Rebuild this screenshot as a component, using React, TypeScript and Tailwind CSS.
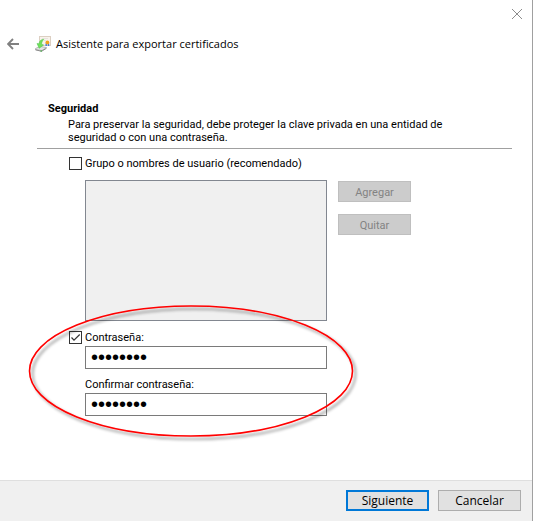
import React, { useState } from 'react';

const WizardIcon = () => (
    <svg className="h-4 w-4" viewBox="0 0 16 16" aria-hidden="true">
        <rect x="4.5" y="0.5" width="11" height="9" fill="#f8f3ec" stroke="#dccfc2" />
        <path d="M7 2.5h6M9 4.5h2" stroke="#e8e2dc" />
        <path d="M11.2 7.5v2.500M13.500 7.500v2.500" stroke="#3c78dc" strokeWidth="1.4" />
        <circle cx="12.400" cy="6.500" r="1.900" fill="#f0a01e" />
        <path d="M0.5 12.500 5 10.500l6.500 1-4.500 3-6.500-.8z" fill="#e4e4e4" stroke="#a8a8a8" strokeWidth="0.8" />
        <path d="M0.5 13.800 6.500 15.300l5-3" fill="none" stroke="#8a8a8a" />
        <path d="M5.500 15h1.500" stroke="#35b535" />
        <path d="M8.800 3.300C5.800 3.500 4.300 5 4 7.800L2 7.500 4.200 12.300 8.600 9l-2-.8C6.600 6.500 7.300 5 8.800 3.300z" fill="#6fe05a" stroke="#4cc44a" strokeWidth="0.5" />
    </svg>
);

const CheckBox = ({ id, checked, onChange }: { id: string; checked: boolean; onChange: () => void }) => (
    <span className="relative flex h-[13px] w-[13px] shrink-0">
        <input
            id={id}
            type="checkbox"
            checked={checked}
            onChange={onChange}
            className="h-[13px] w-[13px] appearance-none border border-[#333333] bg-white"
        />
        {checked && (
            <svg className="pointer-events-none absolute inset-0 h-[13px] w-[13px]" viewBox="0 0 13 13" aria-hidden="true">
                <path d="M2.500 6.500 5 9.200 10.700 3.500" fill="none" stroke="#333333" strokeWidth="1.2" />
            </svg>
        )}
    </span>
);

const App = () => {
    const [useGroups, setUseGroups] = useState(false);
    const [usePassword, setUsePassword] = useState(true);
    const [password, setPassword] = useState('password');
    const [confirm, setConfirm] = useState('password');

    const sideButton = 'h-[21px] w-[73px] border border-[#bfbfbf] bg-[#cccccc] pt-px text-[11px] leading-none text-[#838383]';
    const field = 'block h-[23px] w-full border border-[#7a7a7a] bg-white px-[5px] font-["Liberation_Sans"] text-xl leading-none outline-none';

    return (
        <div className="flex min-h-screen flex-col border-r border-[#a0a0a0] bg-white font-['Roboto',sans-serif] text-[11px] text-black">
            {/* Title bar */}
            <header>
                <div className="flex h-7 justify-end px-[9px] pt-2">
                    <button type="button" aria-label="Cerrar" className="h-3 w-3">
                        <svg viewBox="0 0 12 12" className="h-3 w-3">
                            <path d="M1 1l10 10M11 1L1 11" stroke="#8c8c8c" fill="none" />
                        </svg>
                    </button>
                </div>
                <div className="flex h-8 items-center pl-[7px]">
                    <button type="button" aria-label="Atrás" className="mr-4 h-3 w-3">
                        <svg viewBox="0 0 12 12" className="h-3 w-3">
                            <path d="M6 1L1 6l5 5M1 6h11" stroke="#808080" strokeWidth="1.9" fill="none" />
                        </svg>
                    </button>
                    <WizardIcon />
                    <h1 className="ml-[5px] font-['Open_Sans',sans-serif]">Asistente para exportar certificados</h1>
                </div>
            </header>

            <main className="grow pt-10 pr-5 pb-14 pl-[37px]">
                <div className="border-b border-[#a0a0a0] pb-1 pl-[11px]">
                    <h2 className="leading-[18px] font-bold">Seguridad</h2>
                    <p className="max-w-[410px] pl-5 leading-[13px]">
                        Para preservar la seguridad, debe proteger la clave privada en una entidad de seguridad o con una contraseña.
                    </p>
                </div>

                <div className="pt-2 pl-8">
                    <div className="flex h-[13px] items-center gap-[3px]">
                        <CheckBox id="groups" checked={useGroups} onChange={() => setUseGroups(!useGroups)} />
                        <label htmlFor="groups" className="pt-px leading-3">Grupo o nombres de usuario (recomendado)</label>
                    </div>
                    <div className="mt-[10px] flex gap-[11px] pl-4">
                        <div className="h-[141px] w-[242px] border border-[#828790] bg-[#f0f0f0]" />
                        <div className="flex flex-col gap-3 pt-px">
                            <button type="button" disabled className={sideButton}>Agregar</button>
                            <button type="button" disabled className={sideButton}>Quitar</button>
                        </div>
                    </div>

                    <div className="relative w-[258px] pt-[10px]">
                        <div className="flex h-[13px] items-center gap-[3px]">
                            <CheckBox id="use-password" checked={usePassword} onChange={() => setUsePassword(!usePassword)} />
                            <label htmlFor="use-password" className="pt-px leading-3">Contraseña:</label>
                        </div>
                        <div className="pt-[2px] pl-4">
                            <input
                                type="password"
                                aria-label="Contraseña"
                                value={password}
                                onChange={(e) => setPassword(e.target.value)}
                                className={field}
                            />
                            <label htmlFor="confirm" className="block pt-2 leading-4">Confirmar contraseña:</label>
                            <input
                                id="confirm"
                                type="password"
                                value={confirm}
                                onChange={(e) => setConfirm(e.target.value)}
                                className={field}
                            />
                        </div>

                        {/* Red ring around the password fields */}
                        <svg className="pointer-events-none absolute -top-5 -left-12 h-[146px] w-[344px]" viewBox="0 0 344 146" aria-hidden="true">
                            <defs>
                                <filter id="ring-shadow" x="-5%" y="-10%" width="112%" height="125%">
                                    <feDropShadow dx="3" dy="3" stdDeviation="1.5" floodColor="#000000" floodOpacity="0.45" />
                                </filter>
                            </defs>
                            <ellipse cx="170" cy="70" rx="161.500" ry="65" fill="none" stroke="#ff0000" strokeWidth="1.6" filter="url(#ring-shadow)" />
                        </svg>
                    </div>
                </div>
            </main>

            <footer className="flex justify-end gap-[9px] border-t border-[#dfdfdf] bg-[#f0f0f0] pt-[9px] pr-[11px] pb-[10px] font-['Open_Sans',sans-serif] text-xs">
                <button type="button" className="h-[21px] w-[83px] border-2 border-[#0078d7] bg-[#e1e1e1] leading-none">Siguiente</button>
                <button type="button" className="h-[21px] w-[83px] border border-[#adadad] bg-[#e1e1e1] leading-none">Cancelar</button>
            </footer>
        </div>
    );
};

export default App;
